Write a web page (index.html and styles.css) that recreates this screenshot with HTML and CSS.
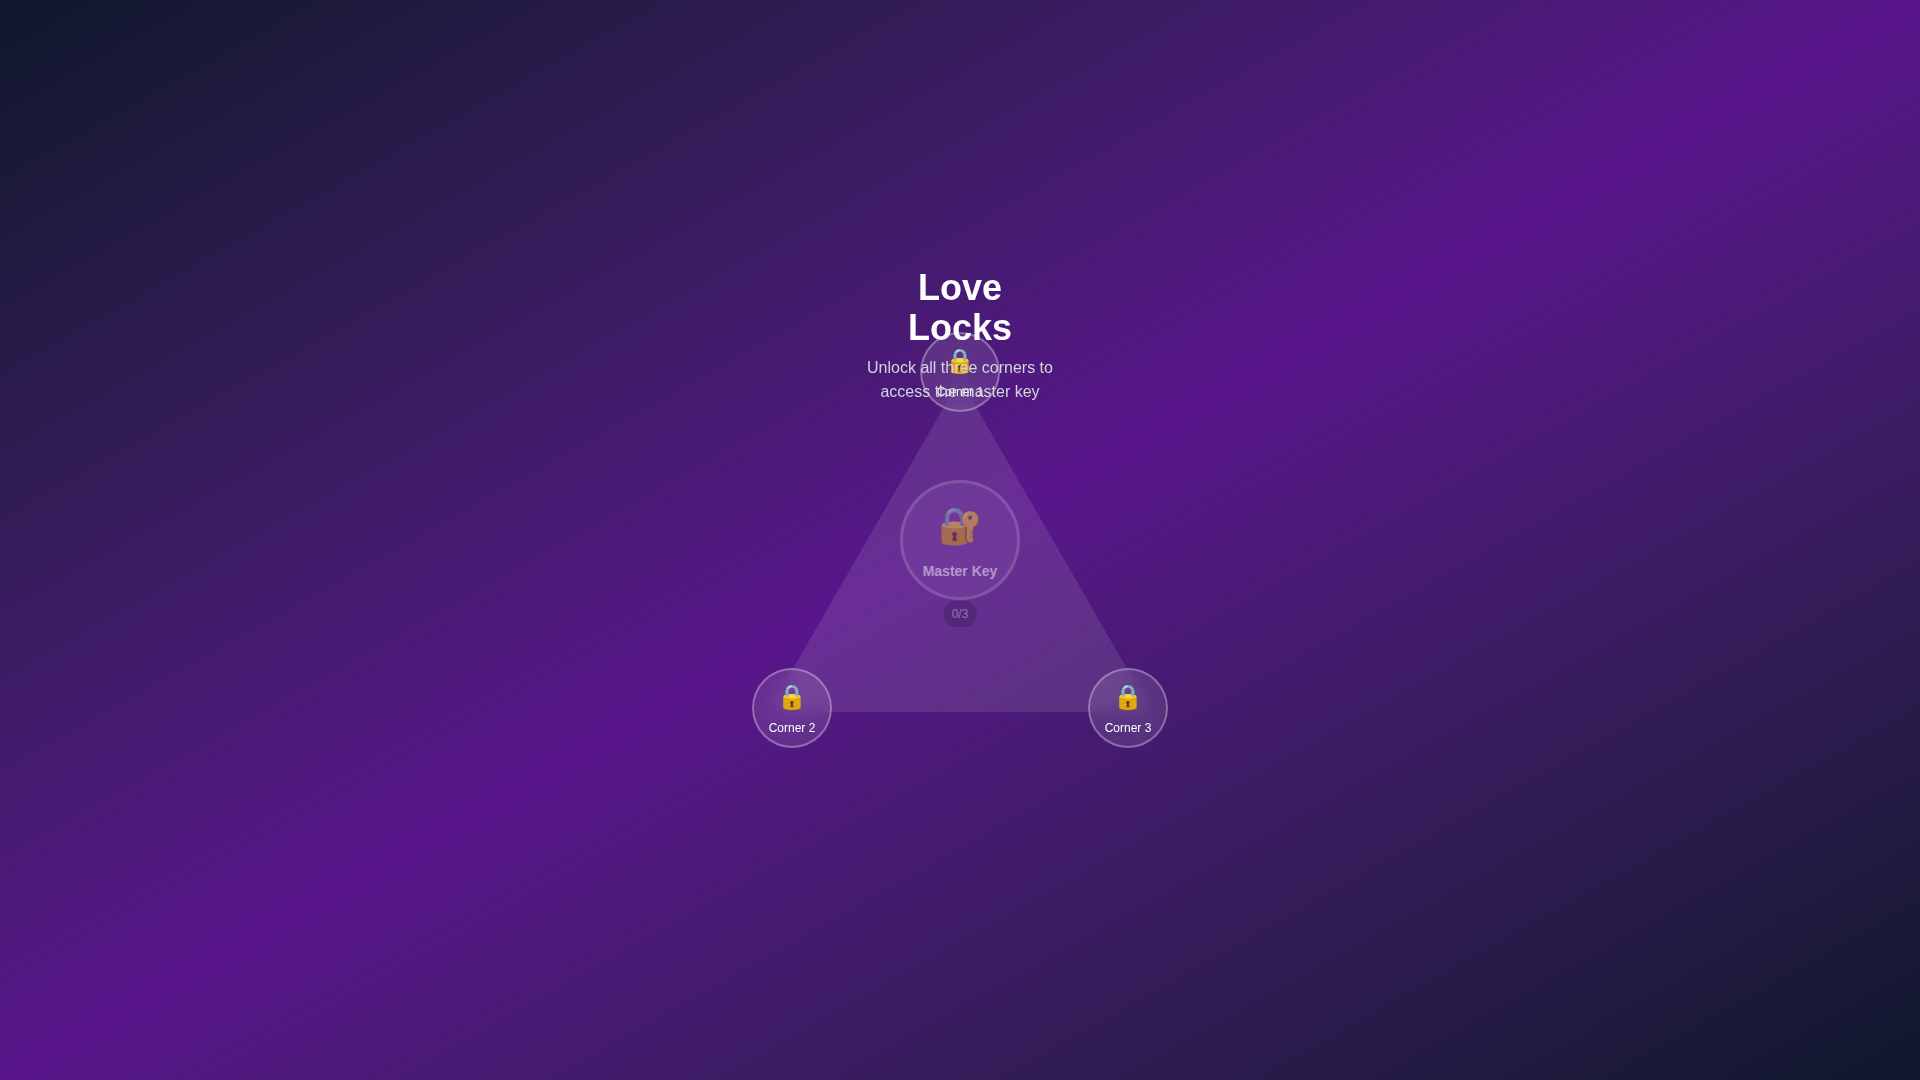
FILE: index.html
```html
<!DOCTYPE html>
<html lang="en">
<head>
  <meta charset="UTF-8" />
  <meta name="viewport" content="width=device-width, initial-scale=1.0"/>
  <title>Love Locks</title>
  <link rel="stylesheet" href="styles.css">
</head>
<body>
  <main class="board">
    <svg class="triangle" viewBox="0 0 384 384" aria-hidden="true">
      <polygon points="192,31 384,364 0,364" />
    </svg>

    <button type="button" class="corner corner-top">
      <span class="corner-icon">🔒</span>
      <span>Corner 1</span>
    </button>
    <button type="button" class="corner corner-left">
      <span class="corner-icon">🔒</span>
      <span>Corner 2</span>
    </button>
    <button type="button" class="corner corner-right">
      <span class="corner-icon">🔒</span>
      <span>Corner 3</span>
    </button>

    <button type="button" class="master" disabled>
      <span class="master-icon">🔐</span>
      <span>Master Key</span>
      <span class="progress">0/3</span>
    </button>

    <header class="intro">
      <h1>Love Locks</h1>
      <p>Unlock all three corners to access the master key</p>
    </header>
  </main>
</body>
</html>
```

FILE: styles.css
```css
* {
  box-sizing: border-box;
}
body {
  margin: 0;
  min-height: 100vh;
  display: flex;
  align-items: center;
  justify-content: center;
  background: linear-gradient(to bottom right in oklab, #0f172b, #59168b, #0f172b);
  color: #fff;
  font-family: "Liberation Sans", Arial, sans-serif;
  line-height: 1.5;
}
.board {
  position: relative;
  width: 384px;
  height: 384px;
}
.triangle {
  display: block;
  width: 100%;
  height: 100%;
  fill: rgba(255, 255, 255, 0.1);
}

/* round lock buttons */
.corner, .master {
  position: absolute;
  display: flex;
  flex-direction: column;
  align-items: center;
  justify-content: center;
  gap: 4px;
  padding: 0;
  border-radius: 50%;
  color: #fff;
  font-family: inherit;
  line-height: 1.5;
  cursor: pointer;
}
.corner {
  width: 80px;
  height: 80px;
  border: 2px solid rgba(255, 255, 255, 0.3);
  background: rgba(255, 255, 255, 0.1);
  backdrop-filter: blur(10px);
  font-size: 12px;
}
.corner-icon {
  font-size: 24px;
}
.corner-top {
  top: -16px;
  left: calc(50% - 40px);
}
.corner-left {
  bottom: -16px;
  left: -16px;
}
.corner-right {
  right: -16px;
  bottom: -16px;
}
.master {
  top: calc(50% - 60px);
  left: calc(50% - 60px);
  width: 120px;
  height: 120px;
  gap: 8px;
  border: 3px solid rgba(255, 255, 255, 0.3);
  background: rgba(255, 255, 255, 0.1);
  font-size: 14px;
  font-weight: bold;
}
.master:disabled {
  opacity: 0.5;
  cursor: not-allowed;
}
.master-icon {
  font-size: 36px;
  font-weight: normal;
}
.progress {
  position: absolute;
  bottom: -30px;
  left: 50%;
  transform: translateX(-50%);
  padding: 4px 8px;
  border-radius: 12px;
  background: rgba(0, 0, 0, 0.3);
  color: rgba(255, 255, 255, 0.7);
  font-size: 12px;
  font-weight: normal;
}

.intro {
  position: absolute;
  top: -80px;
  left: 50%;
  width: 192px;
  transform: translateX(-50%);
  text-align: center;
  pointer-events: none;
}
.intro h1 {
  margin: 0 0 8px;
  font-size: 36px;
  line-height: 40px;
}
.intro p {
  margin: 0;
  color: #d1d5dc;
  font-size: 16px;
}
```
